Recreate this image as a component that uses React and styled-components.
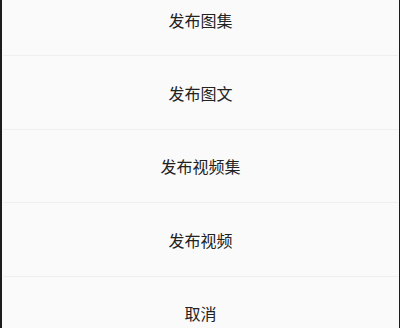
import React from "react";
import styled, { createGlobalStyle } from "styled-components";

const GlobalStyle = createGlobalStyle`
  html, body {
    margin: 0;
    padding: 0;
    background-color: #1c1c1c;
  }
  body {
    font-family: "Noto Sans CJK SC", "Noto Sans", sans-serif;
  }
`;

const Screen = styled.div`
  height: 100vh;
  overflow: hidden;
`;

const Sheet = styled.div`
  margin: -17px 1px 0 2px;
  background-color: #fafafa;
  border-radius: 6px 6px 0 0;
  display: flex;
  flex-direction: column;
`;

const Item = styled.div`
  height: ${(props) => (props.$first ? "72px" : "73.5px")};
  padding-top: 1px;
  box-sizing: border-box;
  display: flex;
  align-items: center;
  justify-content: center;
  font-size: 16px;
  color: #222;
  border-top: ${(props) => (props.$first ? "none" : "1.5px solid #efefef")};
  margin: 0 1px;
`;

const items = ["发布图集", "发布图文", "发布视频集", "发布视频", "取消"];

const App = () => {
  return (
    <React.Fragment>
      <GlobalStyle />
      <Screen>
        <Sheet>
          {items.map((label, i) => (
            <Item key={label} $first={i === 0}>
              {label}
            </Item>
          ))}
        </Sheet>
      </Screen>
    </React.Fragment>
  );
};

export default App;
